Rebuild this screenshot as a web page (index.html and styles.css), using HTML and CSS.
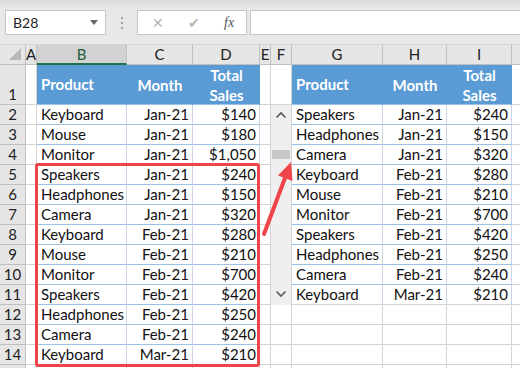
FILE: index.html
```html
<!DOCTYPE html>
<html lang="en">
<head>
    <meta charset="UTF-8">
    <title>Scroll bar table</title>
    <link rel="stylesheet" href="styles.css">
</head>
<body>
    <div class="toolbar">
        <div class="namebox">
            <span>B28</span>
            <svg width="8" height="5" viewBox="0 0 8 5"><path d="M0 0h8L4 5z" fill="#666"/></svg>
        </div>
        <div class="grip"><i></i><i></i><i></i></div>
        <div class="fbuttons">
            <span class="fx-cancel">&#x2715;</span>
            <span class="fx-ok">&#x2714;</span>
            <span class="fx">fx</span>
        </div>
        <div class="finput"></div>
    </div>

    <div class="sheet">
        <div class="grid">
            <!-- column headers -->
            <div class="corner"><svg width="14" height="14" viewBox="0 0 14 14"><path d="M1 13L13 1V13z" fill="#b8b8b8"/></svg></div>
            <div class="ch">A</div>
            <div class="ch sel">B</div>
            <div class="ch">C</div>
            <div class="ch">D</div>
            <div class="ch">E</div>
            <div class="ch">F</div>
            <div class="ch">G</div>
            <div class="ch">H</div>
            <div class="ch">I</div>
            <div class="ch"></div>

            <!-- row 1 -->
            <div class="rh bottom">1</div>
            <div class="c"></div>
            <div class="c th">Product</div>
            <div class="c th mid">Month</div>
            <div class="c th mid">Total<br>Sales</div>
            <div class="c"></div>
            <div class="c"></div>
            <div class="c th">Product</div>
            <div class="c th mid">Month</div>
            <div class="c th mid">Total<br>Sales</div>
            <div class="c"></div>

            <!-- row 2 -->
            <div class="rh">2</div><div class="c"></div>
            <div class="c t">Keyboard</div><div class="c t r">Jan-21</div><div class="c t r">$140</div>
            <div class="c"></div><div class="c"></div>
            <div class="c t">Speakers</div><div class="c t r">Jan-21</div><div class="c t r">$240</div>
            <div class="c"></div>

            <!-- row 3 -->
            <div class="rh">3</div><div class="c"></div>
            <div class="c t">Mouse</div><div class="c t r">Jan-21</div><div class="c t r">$180</div>
            <div class="c"></div><div class="c"></div>
            <div class="c t">Headphones</div><div class="c t r">Jan-21</div><div class="c t r">$150</div>
            <div class="c"></div>

            <!-- row 4 -->
            <div class="rh">4</div><div class="c"></div>
            <div class="c t">Monitor</div><div class="c t r">Jan-21</div><div class="c t r">$1,050</div>
            <div class="c"></div><div class="c"></div>
            <div class="c t">Camera</div><div class="c t r">Jan-21</div><div class="c t r">$320</div>
            <div class="c"></div>

            <!-- row 5 -->
            <div class="rh">5</div><div class="c"></div>
            <div class="c t">Speakers</div><div class="c t r">Jan-21</div><div class="c t r">$240</div>
            <div class="c"></div><div class="c"></div>
            <div class="c t">Keyboard</div><div class="c t r">Feb-21</div><div class="c t r">$280</div>
            <div class="c"></div>

            <!-- row 6 -->
            <div class="rh">6</div><div class="c"></div>
            <div class="c t">Headphones</div><div class="c t r">Jan-21</div><div class="c t r">$150</div>
            <div class="c"></div><div class="c"></div>
            <div class="c t">Mouse</div><div class="c t r">Feb-21</div><div class="c t r">$210</div>
            <div class="c"></div>

            <!-- row 7 -->
            <div class="rh">7</div><div class="c"></div>
            <div class="c t">Camera</div><div class="c t r">Jan-21</div><div class="c t r">$320</div>
            <div class="c"></div><div class="c"></div>
            <div class="c t">Monitor</div><div class="c t r">Feb-21</div><div class="c t r">$700</div>
            <div class="c"></div>

            <!-- row 8 -->
            <div class="rh">8</div><div class="c"></div>
            <div class="c t">Keyboard</div><div class="c t r">Feb-21</div><div class="c t r">$280</div>
            <div class="c"></div><div class="c"></div>
            <div class="c t">Speakers</div><div class="c t r">Feb-21</div><div class="c t r">$420</div>
            <div class="c"></div>

            <!-- row 9 -->
            <div class="rh">9</div><div class="c"></div>
            <div class="c t">Mouse</div><div class="c t r">Feb-21</div><div class="c t r">$210</div>
            <div class="c"></div><div class="c"></div>
            <div class="c t">Headphones</div><div class="c t r">Feb-21</div><div class="c t r">$250</div>
            <div class="c"></div>

            <!-- row 10 -->
            <div class="rh">10</div><div class="c"></div>
            <div class="c t">Monitor</div><div class="c t r">Feb-21</div><div class="c t r">$700</div>
            <div class="c"></div><div class="c"></div>
            <div class="c t">Camera</div><div class="c t r">Feb-21</div><div class="c t r">$240</div>
            <div class="c"></div>

            <!-- row 11 -->
            <div class="rh">11</div><div class="c"></div>
            <div class="c t">Speakers</div><div class="c t r">Feb-21</div><div class="c t r">$420</div>
            <div class="c"></div><div class="c"></div>
            <div class="c t last">Keyboard</div><div class="c t r last">Mar-21</div><div class="c t r last">$210</div>
            <div class="c"></div>

            <!-- row 12 -->
            <div class="rh">12</div><div class="c"></div>
            <div class="c t">Headphones</div><div class="c t r">Feb-21</div><div class="c t r">$250</div>
            <div class="c"></div><div class="c"></div>
            <div class="c"></div><div class="c"></div><div class="c"></div>
            <div class="c"></div>

            <!-- row 13 -->
            <div class="rh">13</div><div class="c"></div>
            <div class="c t">Camera</div><div class="c t r">Feb-21</div><div class="c t r">$240</div>
            <div class="c"></div><div class="c"></div>
            <div class="c"></div><div class="c"></div><div class="c"></div>
            <div class="c"></div>

            <!-- row 14 -->
            <div class="rh">14</div><div class="c"></div>
            <div class="c t last">Keyboard</div><div class="c t r last">Mar-21</div><div class="c t r last">$210</div>
            <div class="c"></div><div class="c"></div>
            <div class="c"></div><div class="c"></div><div class="c"></div>
            <div class="c"></div>

            <!-- row 15, only its top edge shows -->
            <div class="rh"></div><div class="c"></div>
            <div class="c"></div><div class="c"></div><div class="c"></div>
            <div class="c"></div><div class="c"></div>
            <div class="c"></div><div class="c"></div><div class="c"></div>
            <div class="c"></div>
        </div>

        <!-- form control scroll bar -->
        <div class="scrollbar">
            <svg class="arr-up" width="12" height="8" viewBox="0 0 12 8"><path d="M1.5 6.5L6 2l4.5 4.5" fill="none" stroke="#5a5a5a" stroke-width="1.6"/></svg>
            <div class="thumb"></div>
            <svg class="arr-down" width="12" height="8" viewBox="0 0 12 8"><path d="M1.5 1.5L6 6l4.5-4.5" fill="none" stroke="#5a5a5a" stroke-width="1.6"/></svg>
        </div>

        <div class="highlight"></div>

        <svg class="pointer" width="520" height="323" viewBox="0 0 520 323">
            <line x1="264" y1="189" x2="285" y2="133" stroke="#ef4448" stroke-width="4" stroke-linecap="round"/>
            <polygon points="291,117 292.5,136 278,130.5" fill="#ef4448"/>
        </svg>
    </div>
</body>
</html>
```

FILE: styles.css
```css
body {
    margin: 0;
    width: 520px;
    height: 368px;
    overflow: hidden;
    font-family: Lato, "Noto Sans", sans-serif;
    font-size: 15px;
    color: #111;
    background: #fff;
}

/* formula bar */
.toolbar {
    height: 45px;
    box-sizing: border-box;
    padding: 10px 0 0 5px;
    display: flex;
    align-items: flex-start;
    background: linear-gradient(#dadada, #e8e8e8 8px);
    border-bottom: 1px solid #d4d4d4;
}

.namebox {
    width: 101px;
    height: 25px;
    box-sizing: border-box;
    border: 1px solid #c6c6c6;
    background: #fff;
    display: flex;
    align-items: center;
    justify-content: space-between;
    padding: 0 7px 0 7px;
    font-size: 14px;
    color: #222;
}

.grip {
    width: 31px;
    height: 25px;
    display: flex;
    flex-direction: column;
    align-items: center;
    justify-content: center;
    gap: 3px;
}

.grip i {
    width: 2px;
    height: 2px;
    background: #a0a0a0;
}

.fbuttons {
    width: 110px;
    height: 25px;
    box-sizing: border-box;
    border: 1px solid #c6c6c6;
    background: #fff;
    display: flex;
    align-items: center;
    font-size: 14px;
}

.fx-cancel {
    color: #b4b4b4;
    margin-left: 14px;
    width: 36px;
}

.fx-ok {
    color: #b4b4b4;
    width: 36px;
}

.fx {
    font-family: "Liberation Serif", serif;
    font-style: italic;
    color: #555;
    font-size: 14px;
}

.finput {
    flex: 1;
    height: 25px;
    box-sizing: border-box;
    margin-left: 3px;
    border: 1px solid #c6c6c6;
    border-right: none;
    background: #fff;
}

/* sheet grid */
.sheet {
    position: relative;
}

.grid {
    display: grid;
    grid-template-columns: 26px 11px 90px 66px 67px 11px 21px 91px 64px 65px 9px;
    grid-template-rows: 20px 40px repeat(14, 20px);
}

.grid > div {
    box-sizing: border-box;
    overflow: hidden;
    white-space: nowrap;
}

.corner {
    background: #e6e6e6;
    border-right: 1px solid #c0c0c0;
    border-bottom: 1px solid #c0c0c0;
    display: flex;
    align-items: flex-end;
    justify-content: flex-end;
    padding: 0 3px 3px 0;
}

.ch {
    background: #e6e6e6;
    border-right: 1px solid #c0c0c0;
    border-bottom: 1px solid #c0c0c0;
    text-align: center;
    line-height: 19px;
    color: #222;
}

.ch.sel {
    background: #d2d2d2;
    color: #1d5b38;
    border-bottom: 2px solid #217346;
}

.rh {
    background: #e6e6e6;
    border-right: 1px solid #c0c0c0;
    border-bottom: 1px solid #c0c0c0;
    text-align: center;
    line-height: 19px;
    color: #222;
}

.rh.bottom {
    display: flex;
    align-items: flex-end;
    justify-content: center;
}

.c {
    border-right: 1px solid #d4d4d4;
    border-bottom: 1px solid #d4d4d4;
    padding: 0 3px 0 4px;
    line-height: 19px;
}

.th {
    background: #5b9bd5;
    border-right-color: #5b9bd5;
    border-bottom-color: #9bc2e6;
    color: #fff;
    font-weight: bold;
    display: flex;
    align-items: center;
    white-space: normal;
}

.th.mid {
    justify-content: center;
    text-align: center;
    line-height: 20px;
}

.t {
    border-bottom-color: #9bc2e6;
    border-right-color: #c8d3e3;
}

.t.last {
    border-bottom-color: #d4d4d4;
}

.r {
    text-align: right;
}

/* overlays */
.scrollbar {
    position: absolute;
    left: 271px;
    top: 60px;
    width: 20px;
    height: 200px;
    background: #efefef;
}

.arr-up {
    position: absolute;
    left: 4px;
    top: 6px;
}

.arr-down {
    position: absolute;
    left: 4px;
    bottom: 7px;
}

.thumb {
    position: absolute;
    left: 1px;
    top: 45px;
    width: 18px;
    height: 9px;
    background: #c8c8c8;
}

.highlight {
    position: absolute;
    left: 35px;
    top: 118px;
    width: 225px;
    height: 204px;
    box-sizing: border-box;
    border: 3px solid #ef4448;
    border-radius: 3px;
}

.pointer {
    position: absolute;
    left: 0;
    top: 0;
    pointer-events: none;
}
```
